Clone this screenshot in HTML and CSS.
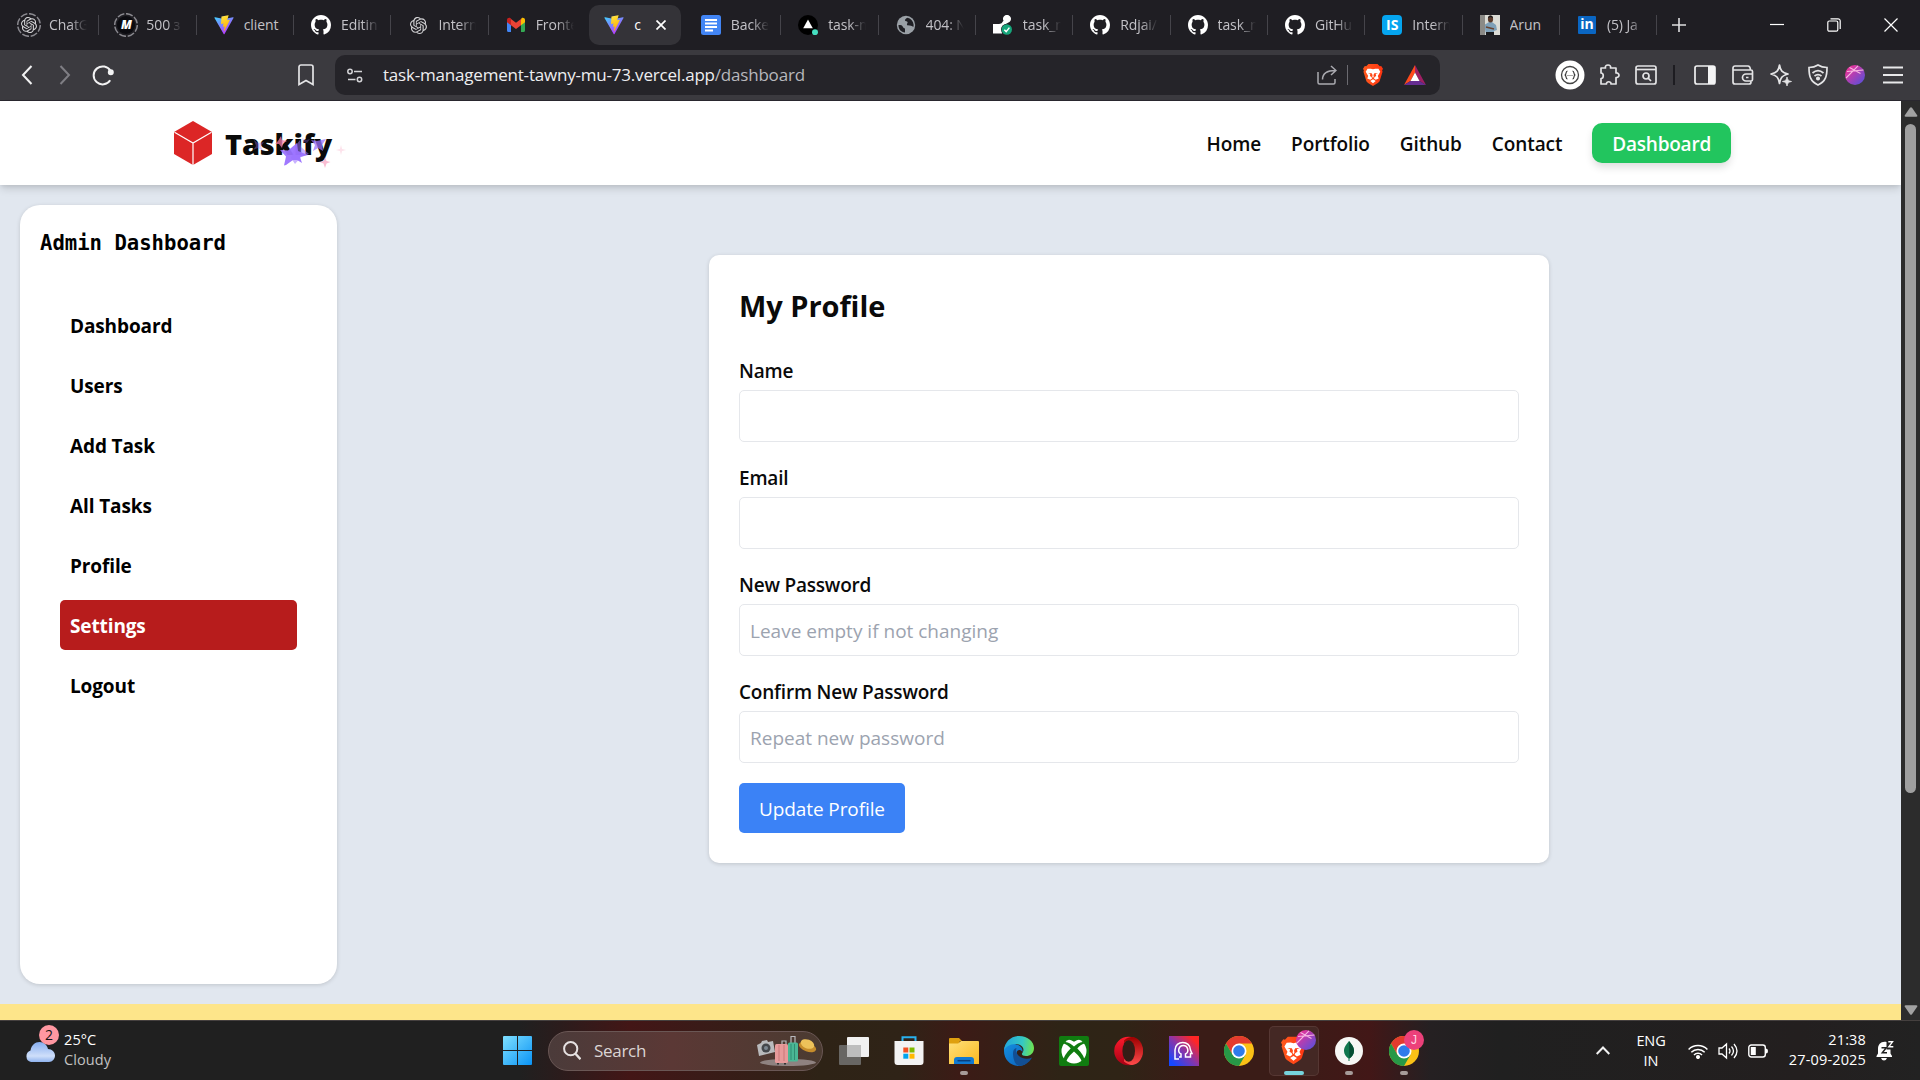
FILE: index.html
```
<!DOCTYPE html>
<html lang="en">
<head>
<meta charset="utf-8">
<title>client</title>
<link rel="stylesheet" href="styles.css">
</head>
<body>
<svg class="sprite" aria-hidden="true">
  <defs>
    <linearGradient id="g-vite" x1="0" y1="0" x2=".6" y2="1"><stop offset="0" stop-color="#41d1ff"/><stop offset="1" stop-color="#bd34fe"/></linearGradient>
    <linearGradient id="g-bolt" x1=".4" y1="0" x2=".6" y2="1"><stop offset="0" stop-color="#ffea83"/><stop offset=".1" stop-color="#ffdd35"/><stop offset="1" stop-color="#ffa800"/></linearGradient>
    <linearGradient id="g-orb" x1="0" y1="0" x2="1" y2="1"><stop offset=".2" stop-color="#e0369e"/><stop offset="1" stop-color="#4a52e0"/></linearGradient>
    <linearGradient id="g-win" x1="0" y1="0" x2="1" y2="1"><stop offset="0" stop-color="#7fe0ff"/><stop offset="1" stop-color="#0a93f5"/></linearGradient>
    <linearGradient id="g-edge" x1="0" y1=".4" x2="1" y2=".5"><stop offset="0" stop-color="#22a5dc"/><stop offset=".6" stop-color="#35c8c4"/><stop offset="1" stop-color="#6fe44f"/></linearGradient>
    <linearGradient id="g-edge2" x1="0" y1="0" x2="1" y2="1"><stop offset="0" stop-color="#1590e0"/><stop offset="1" stop-color="#0b5cb8"/></linearGradient>
    <linearGradient id="g-opera" x1="0" y1="0" x2="0" y2="1"><stop offset="0" stop-color="#ff1b2d"/><stop offset="1" stop-color="#a70014"/></linearGradient>
    <linearGradient id="g-opera2" x1="0" y1="0" x2="0" y2="1"><stop offset="0" stop-color="#9c0000"/><stop offset="1" stop-color="#ff4b4b"/></linearGradient>
    <linearGradient id="g-app" x1="0" y1="1" x2="1" y2="0"><stop offset=".1" stop-color="#1648ff"/><stop offset=".5" stop-color="#8a35a8"/><stop offset=".85" stop-color="#ff2626"/></linearGradient>
    <linearGradient id="g-folder" x1="0" y1="0" x2="1" y2="1"><stop offset="0" stop-color="#ffe07a"/><stop offset="1" stop-color="#fbb91f"/></linearGradient>
    <linearGradient id="g-cloud" x1="0" y1="0" x2="0" y2="1"><stop offset="0" stop-color="#86aef0"/><stop offset=".7" stop-color="#cfdffa"/><stop offset="1" stop-color="#8fb3ee"/></linearGradient>
    <linearGradient id="g-brave" x1="0" y1="0" x2="1" y2="0"><stop offset="0" stop-color="#ff5a1e"/><stop offset="1" stop-color="#ff3410"/></linearGradient>
  </defs>
  <symbol id="ring" viewBox="0 0 24 24"><circle cx="12" cy="12" r="11.300" fill="none" stroke="#8a898f" stroke-width="1.500" pathLength="80" stroke-dasharray="8 2"/></symbol>
  <symbol id="openai" viewBox="0 0 24 24"><path fill="#d4d4d6" d="M22.2819 9.8211a5.9847 5.9847 0 0 0-.5157-4.9108 6.0462 6.0462 0 0 0-6.5098-2.9A6.0651 6.0651 0 0 0 4.9807 4.1818a5.9847 5.9847 0 0 0-3.9977 2.9 6.0462 6.0462 0 0 0 .7427 7.0966 5.98 5.98 0 0 0 .511 4.9107 6.051 6.051 0 0 0 6.5146 2.9001A5.9847 5.9847 0 0 0 13.2599 24a6.0557 6.0557 0 0 0 5.7718-4.2058 5.9894 5.9894 0 0 0 3.9977-2.9001 6.0557 6.0557 0 0 0-.7475-7.0729zm-9.022 12.6081a4.4755 4.4755 0 0 1-2.8764-1.0408l.1419-.0804 4.7783-2.7582a.7948.7948 0 0 0 .3927-.6813v-6.7369l2.02 1.1686a.071.071 0 0 1 .038.052v5.5826a4.504 4.504 0 0 1-4.4945 4.4944zm-9.6607-4.1254a4.4708 4.4708 0 0 1-.5346-3.0137l.142.0852 4.783 2.7582a.7712.7712 0 0 0 .7806 0l5.8428-3.3685v2.3324a.0804.0804 0 0 1-.0332.0615L9.74 19.9502a4.4992 4.4992 0 0 1-6.1408-1.6464zM2.3408 7.8956a4.485 4.485 0 0 1 2.3655-1.9728V11.6a.7664.7664 0 0 0 .3879.6765l5.8144 3.3543-2.0201 1.1685a.0757.0757 0 0 1-.071 0l-4.8303-2.7865A4.504 4.504 0 0 1 2.3408 7.872zm16.5963 3.8558L13.1038 8.364 15.1192 7.2a.0757.0757 0 0 1 .071 0l4.8303 2.7913a4.4944 4.4944 0 0 1-.6765 8.1042v-5.6772a.79.79 0 0 0-.407-.667zm2.0107-3.0231l-.142-.0852-4.7735-2.7818a.7759.7759 0 0 0-.7854 0L9.409 9.2297V6.8974a.0662.0662 0 0 1 .0284-.0615l4.8303-2.7866a4.4992 4.4992 0 0 1 6.6802 4.66zM8.3065 12.863l-2.02-1.1638a.0804.0804 0 0 1-.038-.0567V6.0742a4.4992 4.4992 0 0 1 7.3757-3.4537l-.142.0805L8.704 5.459a.7948.7948 0 0 0-.3927.6813zm1.0976-2.3654l2.602-1.4998 2.6069 1.4998v2.9994l-2.5974 1.4997-2.6067-1.4997Z"/></symbol>
  <symbol id="github" viewBox="0 0 16 16"><path fill="#fff" d="M8 0C3.58 0 0 3.58 0 8c0 3.54 2.29 6.53 5.47 7.59.4.07.55-.17.55-.38 0-.19-.01-.82-.01-1.49-2.01.37-2.53-.49-2.69-.94-.09-.23-.48-.94-.82-1.13-.28-.15-.68-.52-.01-.53.63-.01 1.08.58 1.23.82.72 1.21 1.87.87 2.33.66.07-.52.28-.87.51-1.07-1.78-.2-3.64-.89-3.64-3.95 0-.87.31-1.59.82-2.15-.08-.2-.36-1.02.08-2.12 0 0 .67-.21 2.2.82.64-.18 1.32-.27 2-.27s1.36.09 2 .27c1.53-1.04 2.2-.82 2.2-.82.44 1.1.16 1.92.08 2.12.51.56.82 1.27.82 2.15 0 3.07-1.87 3.75-3.65 3.95.29.25.54.73.54 1.48 0 1.07-.01 1.93-.01 2.2 0 .21.15.46.55.38A8.01 8.01 0 0 0 16 8c0-4.42-3.58-8-8-8z"/></symbol>
  <symbol id="vite" viewBox="0 0 410 404"><path fill="url(#g-vite)" d="M399.641 59.5246L215.643 388.545C211.844 395.338 202.084 395.378 198.228 388.618L10.5817 59.5563C6.38087 52.1896 12.6802 43.2665 21.0281 44.7586L205.223 77.6824C206.398 77.8924 207.601 77.8904 208.776 77.6763L389.119 44.8058C397.439 43.2894 403.768 52.1434 399.641 59.5246Z"/><path fill="url(#g-bolt)" d="M292.965 1.5744L156.801 28.2552C154.563 28.6937 152.906 30.5903 152.771 32.8664L144.395 174.33C144.198 177.662 147.258 180.248 150.51 179.498L188.42 170.749C191.967 169.931 195.172 173.055 194.443 176.622L183.18 231.775C182.422 235.487 185.907 238.661 189.532 237.56L212.947 230.446C216.577 229.344 220.065 232.527 219.297 236.242L201.398 322.875C200.278 328.294 207.486 331.249 210.492 326.603L212.5 323.5L323.454 102.072C325.312 98.3645 322.108 94.137 318.036 94.9228L279.014 102.454C275.347 103.161 272.227 99.746 273.262 96.1583L298.731 7.86689C299.767 4.27314 296.636 0.855181 292.965 1.5744Z"/></symbol>
  <symbol id="gmail" viewBox="0 0 20 20"><path fill="#4285f4" d="M1 6v9.5c0 .8.6 1.5 1.4 1.5H5V8.500z"/><path fill="#34a853" d="M15 17h2.600c.8 0 1.400-.7 1.400-1.500V6l-4 2.500z"/><path fill="#fbbc04" d="M15 4.500v5.700l4-3V5c0-2-2.200-2.800-3.500-1.800z"/><path fill="#ea4335" d="M5 10.200V4l5 3.800L15 4v6.200L10 14z"/><path fill="#c5221f" d="M1 5v2.200l4 3V3.500l-.5-.3C3.200 2.200 1 3 1 5z"/></symbol>
  <symbol id="docs" viewBox="0 0 20 20"><rect width="20" height="20" rx="2.500" fill="#4285f4"/><path stroke="#fff" stroke-width="2" d="M4 5h12M4 8.500h12M4 12h12M4 15.500h8"/></symbol>
  <symbol id="vercel" viewBox="0 0 20 20"><circle cx="10" cy="10" r="10" fill="#000"/><path fill="#fff" d="m10 4.500 4.800 8.800H5.200z"/><circle cx="17" cy="17.200" r="3" fill="#45dfc0"/></symbol>
  <symbol id="globe" viewBox="0 0 20 20"><circle cx="10" cy="10" r="9.200" fill="#9aa0a6"/><path fill="#1f1f24" d="M2.500 10c2.500 0 4 .4 4.300 1.800.3 1.300 2 1 2.200 2.200v3.600C5 17.200 2.300 14 2.500 10zM11.500 2.700C10 3.500 8.800 4.300 9 5.600c.2 1 2.300.5 2.600 1.700.2 1.200-1 1.500-.6 2.500.5 1.400 5 .2 6.300 2.300.3-.8.400-2 .300-2.700-.5-3.500-3-6-6.100-6.700z"/></symbol>
  <symbol id="deploy" viewBox="0 0 20 20"><path fill="#fff" d="M0 9h6c3.500 0 3-2 4.500-3.200A4 4 0 1 1 15 7.700c-2.200 1.700-3.500.8-3.800 4.300L9 18.500H0z"/><circle cx="13.800" cy="14.500" r="5.800" fill="#1f1f24"/><circle cx="13.800" cy="14.500" r="5.200" fill="#16a67b"/><path fill="none" stroke="#fff" stroke-width="1.500" d="m11.300 14.700 1.900 1.900 3.200-4"/></symbol>
  <symbol id="orb" viewBox="0 0 20 20"><circle cx="10" cy="10" r="10" fill="url(#g-orb)"/><path fill="none" stroke="#f7b6e2" stroke-width="1.100" d="M2 6.500 18.500 5M4.500 2.500l11 6M1 13 13 .800"/></symbol>
  <symbol id="brave" viewBox="0 0 22 24"><path fill="url(#g-brave)" d="M6 0h10l2.500 2.500 1.500-.3L22 5l-1 2 .5 1.500L18.500 18c-.5 2-2.500 3-7.500 6-5-3-7-4-7.500-6L.5 8.500 1 7 0 5l2-2.800 1.500.300z"/><path fill="#fff" d="M5 5.200 8.500 5l2.500.7 2.500-.7 3.500.2 2 3.100-2.700 4.800 1 2.700-3.300 1.500-2-1.500.7-1.500 1.800-1.300-.5-2 2.500-1.200-4 .3-1 2 .3 2.200-.8.700-.8-.7.300-2.200-1-2-4-.3L8 11l-.5 2 1.800 1.300.7 1.500-2 1.500-3.300-1.500 1-2.700L3 8.500zM11 16.800l3 1.700-3 2.500-3-2.500z"/></symbol>
  <symbol id="chrome" viewBox="-15 -15 30 30"><circle r="15" fill="#fbc116"/><path fill="#e33b2e" d="M-13-7.500A15 15 0 0 1 13-7.500H0L-6.500 3.750z"/><path fill="#279847" d="M-13-7.500A15 15 0 0 0 0 15L6.500 3.750 0 0-6.500 3.750z"/><circle r="7.500" fill="#fff"/><circle r="5.800" fill="#2f7bea"/></symbol>
</svg>

<div class="screen">
  <div class="tabstrip">
    <div class="tabs">
      <div class="tab"><span class="fav"><svg width="24" height="24"><use href="#ring"/></svg><svg width="16" height="16"><use href="#openai"/></svg></span><span class="label">ChatG</span></div>
      <div class="tab"><span class="fav m"><svg width="24" height="24"><use href="#ring"/></svg><b>M</b></span><span class="label">500 <span class="dim">&#x437;</span></span></div>
      <div class="tab"><span class="fav"><svg width="20" height="20"><use href="#vite"/></svg></span><span class="label full">client</span></div>
      <div class="tab"><span class="fav"><svg width="20" height="20"><use href="#github"/></svg></span><span class="label">Editin</span></div>
      <div class="tab"><span class="fav"><svg width="17" height="17"><use href="#openai"/></svg></span><span class="label">Intern</span></div>
      <div class="tab"><span class="fav"><svg width="20" height="20"><use href="#gmail"/></svg></span><span class="label">Fronte</span></div>
      <div class="tab active"><span class="fav"><svg width="20" height="20"><use href="#vite"/></svg></span><span class="label full">c</span><svg width="10" height="10" viewBox="0 0 10 10"><path d="m.5.500 9 9m0-9-9 9" stroke="#fff" stroke-width="1.700"/></svg></div>
      <div class="tab"><span class="fav"><svg width="20" height="20"><use href="#docs"/></svg></span><span class="label">Backe</span></div>
      <div class="tab"><span class="fav"><svg width="20" height="20"><use href="#vercel"/></svg></span><span class="label">task-m</span></div>
      <div class="tab"><span class="fav"><svg width="20" height="20"><use href="#globe"/></svg></span><span class="label">404: N</span></div>
      <div class="tab"><span class="fav"><svg width="20" height="20"><use href="#deploy"/></svg></span><span class="label">task_m</span></div>
      <div class="tab"><span class="fav"><svg width="20" height="20"><use href="#github"/></svg></span><span class="label">Rdjai/</span></div>
      <div class="tab"><span class="fav"><svg width="20" height="20"><use href="#github"/></svg></span><span class="label">task_m</span></div>
      <div class="tab"><span class="fav"><svg width="20" height="20"><use href="#github"/></svg></span><span class="label">GitHu</span></div>
      <div class="tab"><span class="fav"><span class="tile is">IS</span></span><span class="label">Intern</span></div>
      <div class="tab"><span class="fav"><svg width="20" height="20" viewBox="0 0 20 20"><path fill="#dcdcd6" d="M0 0h20v20H0z"/><path fill="#8b8a86" d="M0 0h5v20H0z"/><path fill="#7fa0b8" d="M5 9.500 9 7h3l4 3 1 5-3 1v4H6l-1-6z"/><ellipse cx="10.500" cy="4" rx="2.600" ry="3.500" fill="#5a3a2b"/><path fill="#1a1a1c" d="M8 3c0-3.500 5-3.500 5 0l-2.500-1zM6 17h8v3H6z"/><path stroke="#6b432f" stroke-width="1.600" d="m6 12 8 2"/></svg></span><span class="label full">Arun</span></div>
      <div class="tab"><span class="fav"><span class="tile in">in</span></span><span class="label">(5) Ja</span></div>
    </div>
    <svg class="plus" width="14" height="14" viewBox="0 0 14 14"><path d="M7 0v14M0 7h14" stroke="#dedee0" stroke-width="1.600"/></svg>
    <div class="wincontrols">
      <svg width="14" height="14" viewBox="0 0 14 14"><path d="M0 6.500h14" stroke="#fff" stroke-width="1.200"/></svg>
      <svg width="14" height="14" viewBox="0 0 14 14" fill="none" stroke="#fff" stroke-width="1.200"><rect x=".8" y="3" width="10" height="10.200" rx="1.500"/><path d="M3.500.8H11A2.200 2.200 0 0 1 13.200 3v8"/></svg>
      <svg width="14" height="14" viewBox="0 0 14 14"><path d="m.5.500 13 13m0-13-13 13" stroke="#fff" stroke-width="1.200"/></svg>
    </div>
  </div>

  <div class="toolbar">
    <div class="navbtns">
      <svg width="12" height="20" viewBox="0 0 12 20" fill="none" stroke="#f2f2f3" stroke-width="2"><path d="M10.500 1 2 10l8.500 9"/></svg>
      <svg width="12" height="20" viewBox="0 0 12 20" fill="none" stroke="#7f7e84" stroke-width="2"><path d="m1.500 1 8.500 9-8.500 9"/></svg>
      <svg width="22" height="22" viewBox="0 0 22 22" fill="none" stroke="#f2f2f3" stroke-width="2"><path d="M18.500 7a9 9 0 1 0-.3 9.300"/><circle cx="18.800" cy="8.300" r="2" fill="#f2f2f3"/></svg>
      <svg class="bookmark" width="16" height="22" viewBox="0 0 16 22" fill="none" stroke="#e4e4e6" stroke-width="1.700"><path d="M1 3a2 2 0 0 1 2-2h10a2 2 0 0 1 2 2v17.500l-7-4-7 4z"/></svg>
    </div>
    <div class="urlbar">
      <svg width="16" height="15" viewBox="0 0 16 15" fill="none" stroke="#d3d3d6" stroke-width="1.500"><circle cx="3" cy="3.500" r="2.200"/><path d="M7 3.500h8M1 11.500h7.500"/><circle cx="12.500" cy="11.500" r="2.200"/></svg>
      <span class="url">task-management-tawny-mu-73.vercel.app<i>/dashboard</i></span>
      <svg width="20" height="20" viewBox="0 0 20 20" fill="none" stroke="#aaaab0" stroke-width="1.500"><path d="M1 7v10.500a1.500 1.500 0 0 0 1.500 1.500h14a1.500 1.500 0 0 0 1.500-1.500V14M5.500 14.500c0-5.500 3.500-9 13-9M14 1l5 4.500-5 4.500"/></svg>
      <span class="vsep"></span>
      <svg width="20" height="22"><use href="#brave"/></svg>
      <svg class="bat" width="22" height="20" viewBox="0 0 22 20"><path fill="#ff4a1c" d="M11 0 0 20l6.500-4L11 7.500z"/><path fill="#9e1f63" d="m11 0 11 20-6.500-4L11 7.500z"/><path fill="#662d91" d="M0 20h22l-6.500-4h-9z"/><path fill="#fff" d="m11 7.500 4.500 8.500h-9z"/></svg>
    </div>
    <div class="extensions">
      <svg width="30" height="30" viewBox="0 0 30 30"><circle cx="15" cy="15" r="14.500" fill="#fff"/><circle cx="15" cy="15" r="8.500" fill="none" stroke="#444" stroke-width="1.300"/><path d="M12.500 11c-2 0-1 3-2.300 4 1.300 1 .3 4 2.300 4M17.500 11c2 0 1 3 2.300 4-1.300 1-.3 4-2.300 4" fill="none" stroke="#333" stroke-width="1.200"/><path d="M12.500 15.500h5" stroke="#555" stroke-dasharray="1 1"/></svg>
      <svg class="puzzle" width="22" height="22" viewBox="0 0 22 22" fill="none" stroke="#e4e4e6" stroke-width="1.700"><path d="M3 4h4.500c-1.500-4 6.500-4 5 0H18v5c4-.5 4 5 0 4.500V20h-5c.5-3-5-3-4.500 0H3v-5.500c3 0 3-5.500 0-5.500z" stroke-linejoin="round"/></svg>
      <svg class="find" width="22" height="20" viewBox="0 0 22 20" fill="none" stroke="#e4e4e6" stroke-width="1.700"><rect x="1" y="1" width="20" height="18" rx="2"/><path d="M1 4.500h20"/><circle cx="11" cy="11" r="3"/><path d="m13 13 3 3"/></svg>
      <span class="vsep dark"></span>
      <svg class="panel" width="22" height="20" viewBox="0 0 22 20"><rect x="1" y="1" width="20" height="18" rx="2" fill="none" stroke="#f0f0f1" stroke-width="1.700"/><path fill="#f4f4f5" d="M14 1h6a1 1 0 0 1 1 1v16a1 1 0 0 1-1 1h-6z"/></svg>
      <svg width="22" height="20" viewBox="0 0 22 20" fill="none" stroke="#e4e4e6" stroke-width="1.700"><path d="M18.500 5v-.5Q18 1 16 1H3a2 2 0 0 0-2 2v14a2 2 0 0 0 2 2h14a2 2 0 0 0 2-2v-1M1 5h18a1.500 1.500 0 0 1 1.500 1.500v8A1.500 1.500 0 0 1 19 16h-5a3.500 3.500 0 0 1 0-7h6.500M14 12.500h2.500"/></svg>
      <svg width="22" height="22" viewBox="0 0 22 22" fill="none" stroke="#e4e4e6" stroke-width="1.700" stroke-linejoin="round"><path d="M9.500 1c1 6 2.500 7.500 8.500 9-3.500 1-5.500 2-6.700 4-.9 1.200-1.400 3-1.800 5.500-1.200-6-2.500-8-8.500-9.500C7 8.500 8.500 7 9.500 1z"/><path fill="#e4e4e6" stroke-width=".8" d="M17 13c.5 3 1.500 4 4.500 4.500C18.500 18 17.500 19 17 22c-.5-3-1.500-4-4.500-4.500 3-.500 4-1.500 4.500-4.500z"/></svg>
      <svg width="20" height="22" viewBox="0 0 20 22" fill="none" stroke="#e4e4e6" stroke-width="1.700"><path d="M10 1c3 2 6 2.500 9 2.500 0 8-1 14-9 17.500C2 17.500 1 11.500 1 3.500 4 3.500 7 3 10 1z"/><path d="M4.500 9c3.500-3 7.500-3 11 0M6.500 12c2.300-1.800 4.700-1.800 7 0"/><circle cx="10" cy="14.500" r="1.200" fill="#e4e4e6"/></svg>
      <svg class="orb" width="20" height="20"><use href="#orb"/></svg>
      <svg class="menu" width="20" height="18" viewBox="0 0 20 18"><path d="M0 1.500h20M0 9h20M0 16.500h20" stroke="#e8e8ea" stroke-width="1.800"/></svg>
    </div>
  </div>

  <div class="viewport">
    <div class="page">
      <header class="site-header">
        <div class="brand">
          <svg width="38" height="44" viewBox="0 0 38 44"><path fill="#dc2626" d="M19 0 38 11v22L19 44 0 33V11z"/><path d="M.5 11.200 19 22l18.500-10.800M19 22v22" stroke="#fff" stroke-width="1.200" fill="none"/></svg>
          <span class="brand-name">Taskify</span>
          <svg class="sparkles" width="100" height="40" viewBox="0 0 100 40"><g fill="#9b72ff"><path d="m28 17 8 .500L45 10l1 8 10 4-8 2 2 6-5-3-4 0-7 5-2 .500 2-9z" opacity=".95"/><path d="m44 12 4-5 1 7 8 7-8 3-6 7-4-6z" opacity=".55"/><path d="m74 6-4 6 1 6-5-3-5 3 2-6-4-5 6 1z" opacity=".75"/><path d="m2 7 4 3 6-1-3 4 2 5-5-3-5 2 3-4z" opacity=".35"/><path d="m50 5 4 2 4-1-3 4-4-1z" opacity=".3"/></g><g fill="#f47ba5"><path d="m29 3 1 4 5 1-4 2-1 5-3-4-4 0 3-3z" opacity=".75"/><path d="m73 24 1.500 4 4 1-4 1.500L73 35l-1.500-4.500-4-1.500 4-1z" opacity=".5"/><path d="m89 12 1 4 4 1-4 1-1 4-1-4-4-1 4-1z" opacity=".22"/></g></svg>
        </div>
        <nav class="site-nav"><a>Home</a><a>Portfolio</a><a>Github</a><a>Contact</a><a class="cta">Dashboard</a></nav>
      </header>
      <div class="content">
        <aside class="sidebar">
          <h2>Admin Dashboard</h2>
          <ul>
            <li>Dashboard</li><li>Users</li><li>Add Task</li><li>All Tasks</li><li>Profile</li><li class="current">Settings</li><li>Logout</li>
          </ul>
        </aside>
        <main>
          <form class="profile">
            <h1>My Profile</h1>
            <div class="field"><label>Name</label><input type="text"></div>
            <div class="field"><label>Email</label><input type="text"></div>
            <div class="field"><label>New Password</label><input type="password" placeholder="Leave empty if not changing"></div>
            <div class="field"><label>Confirm New Password</label><input type="password" placeholder="Repeat new password"></div>
            <button type="button">Update Profile</button>
          </form>
        </main>
      </div>
      <div class="footer-edge"></div>
    </div>
    <div class="scrollbar">
      <svg width="14" height="10" viewBox="0 0 14 10"><path fill="#a2a2a2" d="M6 .8q1-1.200 2 0l5.200 7.400q.6 1.500-1 1.500H1.800q-1.600 0-1-1.500z"/></svg>
      <span class="thumb"></span>
      <svg width="14" height="10" viewBox="0 0 14 10"><path fill="#a2a2a2" d="M6 9.200q1 1.200 2 0l5.200-7.400q.6-1.500-1-1.500H1.800Q.2.300.8 1.800z"/></svg>
    </div>
  </div>

  <div class="taskbar">
    <div class="weather">
      <span class="cloud"><svg width="30" height="20" viewBox="0 0 30 20"><path fill="url(#g-cloud)" d="M6 20a6 6 0 0 1-.5-11.500C6.500 3 10 0 14.500 0 19 0 22 3 23 7c4 0 7 3 7 6.500S27.500 20 24 20z"/></svg><b>2</b></span>
      <span class="wtext"><span>25°C</span><span class="sub">Cloudy</span></span>
    </div>
    <div class="apps">
      <svg width="29" height="29" viewBox="0 0 29 29" fill="url(#g-win)"><path d="M1 0h13v14H0V1q0-1 1-1zM15 0h13q1 0 1 1v13H15zM0 15h14v14H1q-1 0-1-1zM15 15h14v13q0 1-1 1H15z"/></svg>
      <div class="search">
        <svg width="18" height="19" viewBox="0 0 18 19" fill="none" stroke="#e6e1e1" stroke-width="2"><circle cx="7.700" cy="7.700" r="6.600"/><path d="m12.500 12.700 5 5.500" stroke-width="2.400"/></svg>
        <span>Search</span>
        <svg width="60" height="32" viewBox="0 0 60 32"><ellipse cx="31" cy="27.500" rx="28" ry="3.500" fill="#8f8280"/><path fill="#b9babc" d="M0 10 4 8l1-2 5-1 1 2 5-1 2 11-16 4z"/><circle cx="9" cy="13" r="4.500" fill="#45484c"/><circle cx="9" cy="13" r="2" fill="#7c8791"/><path d="M34 8V1.500h4V8M25 9V6h4v3" fill="none" stroke="#b8b8bc" stroke-width="1.200"/><rect x="31" y="7.500" width="10" height="19" rx="1.500" fill="#4ab795"/><path d="M34 9v16M37.500 9v16" stroke="#318d72"/><rect x="18" y="9" width="13" height="19" rx="1.500" fill="#e79a9a"/><path d="M22 10v16M27 10v16" stroke="#c97878"/><path d="M21 28v1.500M28 28v1.500" stroke="#333" stroke-width="2"/><ellipse cx="50.500" cy="12" rx="9" ry="4.500" fill="#c68d2c" transform="rotate(20 50.500 12)"/><ellipse cx="50.500" cy="9" rx="7" ry="4.500" fill="#edc25a" transform="rotate(20 50.500 9)"/></svg>
      </div>
      <div class="icons">
        <span class="app"><svg width="30" height="28" viewBox="0 0 30 28"><rect x="8" y="0" width="22" height="20" rx="1" fill="#f1f1f1"/><rect x="0" y="8" width="22" height="20" rx="1" fill="#777" fill-opacity=".8"/><path fill="#bdbdbd" d="M8 8h14v12H8z"/></svg></span>
        <span class="app"><svg width="30" height="30" viewBox="0 0 30 30"><path d="M8.500 6V1.200h13V6" fill="none" stroke="#29b1ee" stroke-width="2"/><path fill="#f3f3f3" d="M.5 5h29v21a3 3 0 0 1-3 3h-23a3 3 0 0 1-3-3z"/><path fill="#f25022" d="M9.300 11.500h5v5h-5z"/><path fill="#7fba00" d="M15.500 11.500h5v5h-5z"/><path fill="#00a4ef" d="M9.300 17.700h5v5h-5z"/><path fill="#ffb900" d="M15.500 17.700h5v5h-5z"/></svg></span>
        <span class="app run"><svg width="30" height="28" viewBox="0 0 30 28"><path fill="#dfa00f" d="M0 2a1 1 0 0 1 1-1h9l3 3h-2l-2 4H0z"/><path fill="url(#g-folder)" d="M0 6.500h9L12 4h17a1 1 0 0 1 1 1v22H0z"/><path fill="#1079d2" d="M5 27v-4a3 3 0 0 1 3-3h14a3 3 0 0 1 3 3v4z"/><path d="M8.500 23.700h13" stroke="#083f7e" stroke-width="1.500"/></svg></span>
        <span class="app"><svg width="30" height="30" viewBox="0 0 30 30"><path fill="url(#g-edge2)" d="M0 15C0 8 6 6.500 11 8c5 1 8 4 7.500 8-3-4-7-1-5.500 2.500 1.500 4 7 6.500 13 4.500C23 28 18.500 30 15 30 6.500 30 0 23.500 0 15z"/><path fill="#124f94" d="M9 17c0-3 1.500-4.500 3.500-5-1 3 0 6 2.500 8 3.500 3 9 3.500 13 1.500C25 27 20 30 15 30c-4-1.500-6-7-6-13z"/><path fill="url(#g-edge)" d="M0 14.500C.5 6 7 0 15 0c9 0 15 6 15 12 0 5.500-4 8-8 8-3 0-4.500-1-4-2.500C22 12 17 8 11.500 8 5.500 8 1.500 11 0 14.500z"/></svg></span>
        <span class="app"><svg width="30" height="30" viewBox="0 0 30 30"><rect width="30" height="30" rx="2" fill="#107c10"/><circle cx="15" cy="15" r="12.500" fill="#fff"/><path fill="#107c10" d="M7.500 3.500c3-.5 5.500 1 7.500 2.300 2-1.300 4.500-2.800 7.500-2.300L21 1.500H9zM5.500 6C9 5.500 12.500 8 15 10.500 17.500 8 21 5.500 24.500 6l.8 1.500c-2.300.5-5 2.500-7 5 4 4 7.500 8.500 7 12.500L23 27c-.5-4.500-4.500-8.500-8-11.500-3.500 3-7.500 7-8 11.500l-2.300-2c-.5-4 3-8.500 7-12.500-2-2.500-4.700-4.500-7-5z"/></svg></span>
        <span class="app"><svg width="30" height="30" viewBox="0 0 30 30"><circle cx="14.500" cy="15" r="14.300" fill="url(#g-opera)"/><path fill="url(#g-opera2)" d="M10 4.500C20-4 29 5 29 15s-9 19-19 10.500z"/><ellipse cx="14.700" cy="15" rx="6.300" ry="10.800" fill="#351d16"/></svg></span>
        <span class="app"><svg width="30" height="30" viewBox="0 0 30 30"><path fill="url(#g-app)" d="M0 0h30v30H0z"/><path fill="none" stroke="#fff" stroke-width="1.500" d="M10 23H6V14c0-10 15.500-10 15.500 0l1.500 3.500h-1.500V21h-5v-3c4-2 2.500-8.500-2.200-8.500S8 16 12 18v3h-2"/></svg></span>
        <span class="app"><svg width="30" height="30"><use href="#chrome"/></svg></span>
        <span class="app focus"><svg width="25" height="29"><use href="#brave"/></svg><svg class="badge" width="20" height="20"><use href="#orb"/></svg></span>
        <span class="app run"><svg width="28" height="28" viewBox="0 0 28 28"><circle cx="14" cy="14" r="14" fill="#f7f7f5"/><path fill="#11774e" d="M14 4c4 5 5 7 5 10s-2 6-4.500 7.500V24h-1v-2.500C11 20 9 17 9 14s1-5 5-10z"/><path fill="#074e34" d="M14 4c4 5 5 7 5 10s-2 6-4.500 7.500z"/></svg></span>
        <span class="app run"><svg width="30" height="30"><use href="#chrome"/></svg><b class="badge j">J</b></span>
      </div>
    </div>
    <div class="tray">
      <svg width="14" height="9" viewBox="0 0 14 9" fill="none" stroke="#f2f2f2" stroke-width="2"><path d="M.7 8 7 1.500 13.300 8"/></svg>
      <span class="lang"><span>ENG</span><span>IN</span></span>
      <svg class="wifi" width="20" height="16" viewBox="0 0 20 16" fill="none" stroke="#fff" stroke-width="1.500"><path d="M.6 6.500a13.300 13.300 0 0 1 18.800 0M3.300 9.200a9.500 9.500 0 0 1 13.400 0M6 11.900a5.600 5.600 0 0 1 8 0"/><circle cx="10" cy="14" r="1.300" fill="#fff"/></svg>
      <svg class="sound" width="20" height="18" viewBox="0 0 20 18" fill="none" stroke="#fff" stroke-width="1.300"><path d="M1 6h3l4.500-4v14L4 12H1zM11 6.500q2 2.500 0 5M13.500 4.500q4 4.500 0 9M16 2q6 7 0 14"/></svg>
      <svg class="battery" width="20" height="14" viewBox="0 0 20 14"><rect x=".8" y="1" width="16.500" height="12" rx="2.500" fill="none" stroke="#fff" stroke-width="1.400"/><path fill="#fff" d="M2.800 3h5v8h-5zM18 4.500q2 0 2 2.500t-2 2.500z"/></svg>
      <span class="clock"><span>21:38</span><span>27-09-2025</span></span>
      <svg class="bell" width="18" height="20" viewBox="0 0 18 20"><path fill="#fff" d="M10.500 1C5 0 2 3.500 2 8v4.500L.5 15v1H16v-1l-1.500-2.500V8.500h-4zM5 17h6q-1 2.500-3 2.500T5 17z"/><path d="M5.500 6.700h4.800l-4 5h4.700" fill="none" stroke="#222" stroke-width="1.500"/><path d="M12.300.8h4.200l-3.700 5h4.500" fill="none" stroke="#fff" stroke-width="1.400"/></svg>
    </div>
  </div>
</div>
</body>
</html>
```
FILE: styles.css
```
* { box-sizing: border-box; }
body {
  margin: 0;
  font-family: "Open Sans", "Noto Sans", sans-serif;
  color: #0a0a0a;
}
svg { display: block; flex: none; }
.sprite { position: absolute; width: 0; height: 0; }
.screen {
  width: 1920px;
  height: 1080px;
  overflow: hidden;
  display: flex;
  flex-direction: column;
}

/* Browser tab strip */
.tabstrip {
  height: 50px;
  flex: none;
  background: #1f1e23;
  display: flex;
  align-items: center;
  padding-left: 2px;
}
.tabs { display: flex; width: 1654px; }
.tab {
  width: 97.35px;
  height: 40px;
  flex: none;
  display: flex;
  align-items: center;
  gap: 8px;
  padding-left: 15px;
  background: linear-gradient(#45444a, #45444a) right center / 1px 20px no-repeat;
}
.fav {
  width: 24px;
  height: 24px;
  flex: none;
  display: grid;
  place-items: center;
}
.fav > * { grid-area: 1 / 1; }
.m b { color: #fff; font: italic 800 12px/18px "Open Sans", sans-serif; background: #0b0b10; border-radius: 50%; width: 18px; text-align: center; }
.label {
  width: 38px;
  overflow: hidden;
  white-space: nowrap;
  font-size: 14px;
  line-height: 20px;
  letter-spacing: -.1px;
  color: #c3c2c7;
  -webkit-mask-image: linear-gradient(90deg, #000 55%, transparent);
  mask-image: linear-gradient(90deg, #000 55%, transparent);
}
.label.full { -webkit-mask-image: none; mask-image: none; }
.dim { color: #8a898e; }
.tab.active { background: #343338; border-radius: 10px; width: 92px; margin: 0 2.500px 0 3.25px; padding-left: 13px; }
.active .label { width: 14px; color: #fff; }
.tab:has(+ .active) { background: none; }
.tile { width: 20px; height: 20px; border-radius: 4px; color: #fff; font-weight: 700; font-size: 14px; line-height: 20px; text-align: center; }
.is { background: #05a5ef; }
.in { background: #0a66c2; border-radius: 1px; width: 18px; height: 18px; line-height: 16px; }
.plus { margin-left: 16px; }
.wincontrols { display: flex; gap: 43px; margin: 0 22px 0 auto; }

/* Browser toolbar */
.toolbar {
  height: 51px;
  flex: none;
  background: #3b3a3f;
  border-bottom: 1px solid #2a282f;
  display: flex;
  align-items: center;
}
.navbtns { display: flex; align-items: center; width: 335px; padding-left: 21px; gap: 26px; }
.navbtns svg:nth-child(3) { margin-left: -5px; }
.bookmark { margin: 0 21px 0 auto; }
.urlbar {
  width: 1105px;
  height: 40px;
  border-radius: 10px;
  background: #252429;
  display: flex;
  align-items: center;
  padding: 0 14px 0 12px;
}
.url { flex: 1; margin-left: 20px; padding-bottom: 2px; font-size: 17px; letter-spacing: -.2px; color: #eeeef0; white-space: nowrap; }
.url i { font-style: normal; color: #b8b8bd; }
.vsep { width: 1.5px; height: 20px; background: #6b6a70; margin: 0 15px 0 10px; }
.vsep.dark { background: #1d1c21; width: 2px; margin: 0; }
.bat { margin-left: 21px; }
.extensions { flex: 1; display: flex; align-items: center; gap: 16px; padding-left: 115px; }
.puzzle { margin-left: -3px; }
.find { margin-left: -1px; }
.panel { margin-left: 3px; }
.orb { margin-left: 1px; }
.menu { margin-left: 2px; }

/* Page area */
.viewport { height: 919px; flex: none; display: flex; }
.page { width: 1901px; display: flex; flex-direction: column; background: #e1e7ef; }
.site-header {
  height: 84px;
  flex: none;
  background: #fff;
  box-shadow: 0 5px 8px -1px rgba(0, 0, 0, .13), 0 2px 4px -1px rgba(0, 0, 0, .08);
  display: flex;
  align-items: center;
  justify-content: space-between;
  padding: 0 170px 0 174px;
}
.brand { display: flex; align-items: center; gap: 13px; position: relative; }
.brand-name { padding-top: 2px; font-size: 29px; font-weight: 800; line-height: 40px; letter-spacing: -.2px; }
.sparkles { position: absolute; left: 78px; top: 12px; }
.site-nav { display: flex; align-items: center; gap: 30px; font-size: 19px; font-weight: 600; line-height: 28px; letter-spacing: -.1px; }
.site-nav a { padding-top: 2px; }
.site-nav .cta { padding: 7px 20px 5px; color: #fff; background: #22c55e; border-radius: 10px; box-shadow: 0 5px 8px -1px rgba(0, 0, 0, .14); letter-spacing: -.23px; }
.content { flex: 1; display: flex; padding: 20px; }
.sidebar {
  width: 317px;
  background: #fff;
  border-radius: 20px;
  box-shadow: 0 1px 4px rgba(0, 0, 0, .15);
  padding: 19px 20px 20px;
}
.sidebar h2 {
  margin: 0 0 38px;
  font: 700 20.600px/38px "DejaVu Sans Mono", monospace;
  white-space: nowrap;
  color: #000;
}
.sidebar ul { list-style: none; margin: 0; padding: 0 20px; display: flex; flex-direction: column; gap: 10px; }
.sidebar li { height: 50px; padding: 1px 10px 0; line-height: 51px; border-radius: 5px; font-size: 19px; font-weight: 700; letter-spacing: -.12px; color: #000; }
.sidebar .current { background: #b71c1c; color: #fff; }
.content main { flex: 1; display: flex; justify-content: center; align-items: flex-start; padding: 50px 0 0 40px; }
.profile {
  width: 840px;
  height: 608px;
  padding: 31px 30px 30px;
  background: #fff;
  border-radius: 10px;
  box-shadow: 0 1px 4px rgba(0, 0, 0, .15);
}
.profile h1 { margin: 0 0 30px; font-size: 29px; font-weight: 700; line-height: 40px; letter-spacing: -.05px; }
.field { margin-bottom: 21px; }
.field label { display: block; font-size: 19px; font-weight: 600; line-height: 30px; margin-bottom: 4px; letter-spacing: -.2px; }
.field input { display: block; width: 100%; height: 52px; padding: 1px 10px 0; border: 1px solid #e5e7eb; border-radius: 5px; outline: 0; font: 19px/30px "Open Sans", sans-serif; letter-spacing: 0; }
.field input::placeholder { color: #9ca3af; opacity: 1; }
.profile button { display: block; height: 50px; margin-top: -1px; padding: 1px 20px 0; border: 0; border-radius: 5px; background: #3b82f6; color: #fff; font: 19px/30px "Open Sans", sans-serif; letter-spacing: -.1px; }
.footer-edge { height: 16px; flex: none; background: #fde58a; }
.scrollbar { width: 19px; background: #2c2c2c; display: flex; flex-direction: column; align-items: center; padding: 6px 0 5px; }
.thumb { width: 11px; height: 669px; margin: 7px 0 auto; border-radius: 6px; background: #9f9f9f; }

/* Windows taskbar */
.taskbar {
  height: 60px;
  flex: none;
  border-top: 1px solid #45403f;
  background: linear-gradient(90deg, #202020 520px, #2b1c1c 560px, #431616 630px, #3a1b18 700px, #2e2316 820px, #2f2317 900px, #3c1b16 960px, #2e2416 1060px, #2f2416 1120px, #3a1c17 1190px, #3a1c17 1280px, #421717 1370px, #252022 1430px, #202020 1500px, #231f1f 1800px, #222 1920px);
  display: flex;
  align-items: center;
  color: #fff;
}
.weather { width: 503px; display: flex; padding-left: 25px; gap: 9px; }
.cloud { position: relative; width: 30px; height: 38px; display: flex; align-items: flex-end; padding-bottom: 8px; }
.cloud b { position: absolute; left: 14px; top: -7px; width: 20px; height: 20px; border-radius: 50%; background: #ff97a1; color: #151515; font-weight: 400; font-size: 14px; line-height: 20px; text-align: center; }
.wtext { display: flex; flex-direction: column; margin-top: -2px; font-size: 14.500px; line-height: 20px; letter-spacing: .1px; }
.sub { color: #c2c2c2; }
.apps { display: flex; align-items: center; }
.search { width: 275px; height: 40px; margin: 0 3px 0 16px; border-radius: 20px; border: 1px solid #6a5755; background: linear-gradient(90deg, #4b3b3a, #5b3835 45%, #4b3b31); display: flex; align-items: center; padding: 0 5px 0 14px; }
.search span { flex: 1; margin-left: 13px; font-size: 17px; letter-spacing: -.3px; color: #dcd5d4; }
.icons { display: flex; }
.app { width: 55px; height: 50px; display: grid; place-items: center; position: relative; border-radius: 5px; }
.focus { width: 50px; margin: 0 2.500px; background: #442824; box-shadow: inset 0 0 0 1px #563733; }
.run::after, .focus::after { content: ""; position: absolute; bottom: 1px; left: calc(50% - 4px); width: 8px; height: 4px; border-radius: 2px; background: #a69b99; }
.focus::after { left: calc(50% - 10px); width: 20px; background: #76d3dc; }
.badge { position: absolute; right: 3px; top: 4px; }
.badge.j { right: 7px; width: 20px; height: 20px; border-radius: 50%; background: #ec407a; color: #ffd6e4; font: 400 12px/20px "Liberation Sans", sans-serif; text-align: center; }
.tray { margin-left: auto; display: flex; align-items: center; font-size: 14.500px; line-height: 20px; letter-spacing: -.1px; padding-right: 26px; }
.lang, .clock { display: flex; flex-direction: column; }
.lang { width: 40px; margin: 0 17px 0 21px; text-align: center; }
.sound { margin: 0 10px; }
.clock { width: 90px; margin: -2px 10px 0 8px; text-align: right; letter-spacing: .15px; }
```
